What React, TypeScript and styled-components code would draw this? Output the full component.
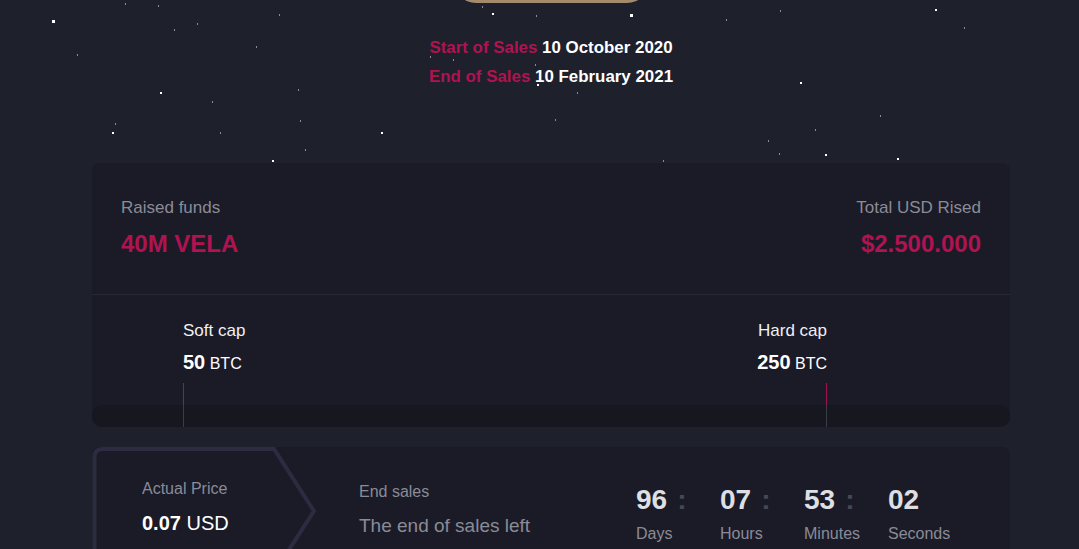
import React from "react";
import styled, { createGlobalStyle } from "styled-components";

const GlobalStyle = createGlobalStyle`
  html, body {
    margin: 0;
    padding: 0;
    background: #1e202c;
  }
  body {
    font-family: "Liberation Sans", Arial, sans-serif;
    overflow: hidden;
  }
  * { box-sizing: border-box; }
`;

const Page = styled.div`
  position: relative;
  width: 1079px;
  height: 549px;
  overflow: hidden;
  background: #1e202c;
`;

const Sky = styled.div`
  position: absolute;
  inset: 0;
  pointer-events: none;
`;

const Star = styled.span<{ $size: number; $dim: boolean }>`
  position: absolute;
  width: ${(p) => (p.$dim ? 1 : p.$size)}px;
  height: ${(p) => p.$size}px;
  background: ${(p) => (p.$dim ? "#8a8c9a" : "#ffffff")};
`;

const Content = styled.div`
  position: relative;
  width: 918px;
  margin-left: 92px;
  display: flex;
  flex-direction: column;
`;

const Hero = styled.header`
  display: flex;
  flex-direction: column;
  align-items: center;
`;

const BuyButton = styled.div`
  width: 195px;
  height: 44px;
  margin-top: -41px;
  border-radius: 22px;
  background: #a38b6b;
`;

const Dates = styled.div`
  margin-top: 30px;
  font-size: 16.9px;
  line-height: 29.4px;
  font-weight: 700;
  color: #ffffff;
  text-align: center;
`;

const Accent = styled.span`
  color: #b01350;
`;

const FundsCard = styled.section`
  margin-top: 71px;
  background: #1a1b27;
  border-radius: 8px 8px 10px 10px;
  display: flex;
  flex-direction: column;
`;

const FundsTop = styled.div`
  display: flex;
  justify-content: space-between;
  padding: 35px 29px 36px 29px;
  border-bottom: 1px solid #262836;
`;

const Stat = styled.div<{ $right?: boolean }>`
  display: flex;
  flex-direction: column;
  align-items: ${(p) => (p.$right ? "flex-end" : "flex-start")};
`;

const StatLabel = styled.div`
  font-size: 17px;
  line-height: 20px;
  color: #8a8b97;
`;

const StatValue = styled.div`
  margin-top: 12px;
  font-size: 24px;
  line-height: 28px;
  font-weight: 700;
  color: #b01350;
`;

const CapsArea = styled.div`
  padding-top: 26px;
  display: flex;
  flex-direction: column;
`;

const CapsRow = styled.div`
  position: relative;
  z-index: 1;
  display: flex;
  justify-content: space-between;
  padding: 0 183px 0 91px;
  margin-bottom: -22px;
`;

const Cap = styled.div<{ $right?: boolean }>`
  display: flex;
  flex-direction: column;
  align-items: ${(p) => (p.$right ? "flex-end" : "flex-start")};
`;

const CapLabel = styled.div`
  font-size: 17px;
  line-height: 20px;
  color: #f0f0f5;
`;

const CapValue = styled.div`
  margin-top: 9px;
  height: 24px;
  line-height: 24px;
  color: #ffffff;
  font-size: 16px;
  white-space: nowrap;
`;

const CapAmount = styled.strong`
  font-size: 20px;
  font-weight: 700;
`;

const Tick = styled.div`
  margin-top: 9px;
  width: 1px;
  height: 44px;
  background: #a01450;
  border-bottom: 22px solid #3a3b4b;
`;

const Track = styled.div`
  height: 22px;
  border-radius: 10px;
  background: #16171f;
`;

const SaleCard = styled.section`
  margin-top: 20px;
  height: 130px;
  background: #1a1b27;
  border-radius: 8px;
  display: flex;
`;

const PriceBlock = styled.div`
  position: relative;
  flex: 0 0 226px;
  height: 128px;
  padding: 32px 0 0 50px;
`;

const PriceOutline = styled.svg`
  position: absolute;
  inset: 0;
  width: 226px;
  height: 128px;
`;

const PriceInner = styled.div`
  position: relative;
  display: flex;
  flex-direction: column;
`;

const MutedLabel = styled.div`
  font-size: 16px;
  line-height: 20px;
  color: #8a8b97;
`;

const PriceValue = styled.div`
  margin-top: 12px;
  font-size: 20px;
  line-height: 24px;
  color: #ffffff;
  white-space: nowrap;
`;

const Bold = styled.strong`
  font-weight: 700;
`;

const Info = styled.div`
  flex: 0 0 277px;
  margin-left: 41px;
  padding-top: 35px;
  display: flex;
  flex-direction: column;
`;

const InfoText = styled.div`
  margin-top: 12px;
  font-size: 19px;
  line-height: 24px;
  color: #8a8b97;
  white-space: nowrap;
`;

const Countdown = styled.div`
  display: flex;
  padding-top: 37px;
`;

const Unit = styled.div`
  width: 84px;
  display: flex;
  flex-direction: column;
`;

const NumberRow = styled.div`
  display: flex;
  align-items: baseline;
  font-size: 28px;
  line-height: 32px;
  font-weight: 700;
`;

const Digits = styled.span`
  color: #dedfe5;
`;

const Colon = styled.span`
  margin-left: 10px;
  color: #474857;
`;

const UnitLabel = styled.div`
  margin-top: 8px;
  font-size: 16px;
  line-height: 20px;
  color: #8a8b97;
`;

const stars: [number, number, number, boolean][] = [
  [52, 20, 3, false],
  [160, 92, 2, false],
  [112, 132, 2, false],
  [272, 160, 2, false],
  [492, 13, 2, false],
  [630, 14, 3, false],
  [537, 84, 2, false],
  [935, 9, 2, false],
  [800, 82, 2, false],
  [825, 154, 2, false],
  [897, 158, 2, false],
  [381, 132, 2, false],
  [125, 3, 2, true],
  [158, 5, 2, true],
  [197, 23, 2, true],
  [174, 29, 2, true],
  [279, 14, 2, true],
  [256, 46, 2, true],
  [77, 54, 2, true],
  [212, 101, 2, true],
  [298, 89, 2, true],
  [300, 120, 2, true],
  [115, 123, 2, true],
  [220, 132, 2, true],
  [305, 149, 2, true],
  [780, 10, 2, true],
  [726, 19, 2, true],
  [964, 27, 2, true],
  [880, 115, 2, true],
  [815, 129, 2, true],
  [768, 140, 2, true],
  [779, 153, 2, true],
  [482, 6, 2, true],
  [536, 15, 2, true],
  [430, 56, 2, true],
  [453, 59, 2, true],
  [535, 64, 2, true],
  [577, 92, 2, true],
  [555, 119, 2, true],
  [663, 160, 2, true],
];

const units = [
  { value: "96", label: "Days" },
  { value: "07", label: "Hours" },
  { value: "53", label: "Minutes" },
  { value: "02", label: "Seconds" },
];

export default function App() {
  return (
    <Page>
      <GlobalStyle />
      <Sky>
        {stars.map(([x, y, s, dim], i) => (
          <Star key={i} $size={s} $dim={dim} style={{ left: x, top: y }} />
        ))}
      </Sky>
      <Content>
        <Hero>
          <BuyButton />
          <Dates>
            <div>
              <Accent>Start of Sales</Accent> 10 October 2020
            </div>
            <div>
              <Accent>End of Sales</Accent> 10 February 2021
            </div>
          </Dates>
        </Hero>

        <FundsCard>
          <FundsTop>
            <Stat>
              <StatLabel>Raised funds</StatLabel>
              <StatValue>40M VELA</StatValue>
            </Stat>
            <Stat $right>
              <StatLabel>Total USD Rised</StatLabel>
              <StatValue>$2.500.000</StatValue>
            </Stat>
          </FundsTop>
          <CapsArea>
            <CapsRow>
              <Cap>
                <CapLabel>Soft cap</CapLabel>
                <CapValue>
                  <CapAmount>50</CapAmount> BTC
                </CapValue>
                <Tick />
              </Cap>
              <Cap $right>
                <CapLabel>Hard cap</CapLabel>
                <CapValue>
                  <CapAmount>250</CapAmount> BTC
                </CapValue>
                <Tick />
              </Cap>
            </CapsRow>
            <Track />
          </CapsArea>
        </FundsCard>

        <SaleCard>
          <PriceBlock>
            <PriceOutline viewBox="0 0 226 128">
              <path
                d="M2.5 126 L2.5 10 Q2.5 2 10.5 2 L182 2 L222 64 L182 126"
                fill="none"
                stroke="#2b2c40"
                strokeWidth="4"
                strokeLinejoin="miter"
              />
            </PriceOutline>
            <PriceInner>
              <MutedLabel>Actual Price</MutedLabel>
              <PriceValue>
                <Bold>0.07</Bold> USD
              </PriceValue>
            </PriceInner>
          </PriceBlock>
          <Info>
            <MutedLabel>End sales</MutedLabel>
            <InfoText>The end of sales left</InfoText>
          </Info>
          <Countdown>
            {units.map((u, i) => (
              <Unit key={u.label}>
                <NumberRow>
                  <Digits>{u.value}</Digits>
                  {i < units.length - 1 && <Colon>:</Colon>}
                </NumberRow>
                <UnitLabel>{u.label}</UnitLabel>
              </Unit>
            ))}
          </Countdown>
        </SaleCard>
      </Content>
    </Page>
  );
}
